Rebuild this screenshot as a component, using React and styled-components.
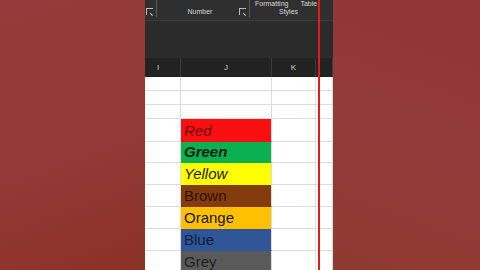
import React from 'react';
import styled, { createGlobalStyle } from 'styled-components';

const GlobalStyle = createGlobalStyle`
  html, body {
    margin: 0;
    padding: 0;
    width: 480px;
    height: 270px;
    overflow: hidden;
  }
`;

const Page = styled.div`
  display: flex;
  width: 480px;
  height: 270px;
  font-family: "Liberation Sans", Arial, sans-serif;
`;

const Side = styled.div`
  width: ${({ w }) => w}px;
  flex-shrink: 0;
  background: ${({ left }) =>
    left
      ? 'linear-gradient(160deg, #953b3b 0%, #933a38 55%, #8b3126 100%)'
      : 'linear-gradient(200deg, #913636 0%, #933a3a 55%, #8e3a30 100%)'};
`;

const Panel = styled.div`
  position: relative;
  width: 188px;
  flex-shrink: 0;
  display: flex;
  flex-direction: column;
  background: #fff;
  overflow: hidden;
`;

const Ribbon = styled.div`
  height: 58px;
  flex-shrink: 0;
  background: #2d2d2d;
  display: flex;
  flex-direction: column;
`;

const GroupRow = styled.div`
  height: 20px;
  flex-shrink: 0;
  display: grid;
  grid-template-columns: 12px 93px 83px;
  border-bottom: 1px solid #3a3a3a;
  background: #2f2f2f;
`;

const Group = styled.div`
  position: relative;
  display: flex;
  align-items: flex-end;
  justify-content: ${({ align }) => align || 'center'};
  border-right: ${({ sep }) => (sep ? '1px solid #5a5a5a' : 'none')};
  height: 17px;
  color: #d8d8d8;
  font-size: 7px;
`;

const GroupLabel = styled.span`
  padding-bottom: 2px;
  margin-right: ${({ mr }) => mr || 0}px;
`;

const Launcher = styled.span`
  position: absolute;
  right: ${({ r }) => r}px;
  bottom: 2px;
  width: 6px;
  height: 6px;
  border-left: 1px solid #bbb;
  border-top: 1px solid #bbb;
  &::after {
    content: '';
    position: absolute;
    right: 0;
    bottom: 0;
    width: 3px;
    height: 1px;
    background: #ddd;
    transform: rotate(45deg);
  }
`;

const TopCut = styled.div`
  position: absolute;
  top: 0;
  left: 5px;
  display: flex;
  gap: 12px;
  color: #d8d8d8;
  font-size: 7px;
  line-height: 8px;
`;

const RibbonBody = styled.div`
  flex: 1;
  background: #2b2b2b;
`;

const ColHeader = styled.div`
  height: 19px;
  flex-shrink: 0;
  display: grid;
  grid-template-columns: 36px 91px 44px 17px;
  background: #222;
`;

const ColName = styled.div`
  display: flex;
  align-items: center;
  justify-content: ${({ align }) => align || 'center'};
  padding-left: ${({ pl }) => pl || 0}px;
  border-right: 1px solid #3c3c3c;
  color: #cfcfcf;
  font-size: 8px;
`;

const Sheet = styled.div`
  flex: 1;
  min-height: 0;
  overflow: hidden;
  display: grid;
  grid-template-columns: 36px 91px 44px 17px;
  grid-template-rows: 14px 14px 14px 23px 21px 22px 22px 22px 22px 22px;
`;

const Cell = styled.div`
  border-right: 1px solid #dcdcdc;
  border-bottom: 1px solid #dcdcdc;
`;

const ColorCell = styled.div`
  background: ${({ bg }) => bg};
  color: ${({ fg }) => fg};
  font-size: 15px;
  font-style: ${({ italic }) => (italic ? 'italic' : 'normal')};
  font-weight: ${({ bold }) => (bold ? 'bold' : 'normal')};
  display: flex;
  align-items: flex-end;
  padding: 0 0 1px 3px;
  line-height: 18px;
  border-bottom: 1px solid ${({ bg }) => bg};
  border-right: 1px solid #dcdcdc;
`;

const PageBreak = styled.div`
  position: absolute;
  top: 0;
  bottom: 0;
  left: 173px;
  width: 2px;
  background: #e21b1b;
`;

const colors = [
  { name: 'Red', bg: '#f81010', fg: '#6e0808', italic: true },
  { name: 'Green', bg: '#0db050', fg: '#0b1f10', italic: true, bold: true },
  { name: 'Yellow', bg: '#ffff00', fg: '#1a1a00', italic: true },
  { name: 'Brown', bg: '#843c0c', fg: '#2a1204' },
  { name: 'Orange', bg: '#ffc000', fg: '#1c1400' },
  { name: 'Blue', bg: '#2f5597', fg: '#0d1d3e' },
  { name: 'Grey', bg: '#5a5a5a', fg: '#1e1e1e' },
];

export default function App() {
  return (
    <Page>
      <GlobalStyle />
      <Side w={145} left />
      <Panel>
        <Ribbon>
          <GroupRow>
            <Group sep>
              <Launcher r={3} />
            </Group>
            <Group sep>
              <GroupLabel mr={6}>Number</GroupLabel>
              <Launcher r={3} />
            </Group>
            <Group>
              <TopCut>
                <span>Formatting</span>
                <span>Table</span>
              </TopCut>
              <GroupLabel mr={6}>Styles</GroupLabel>
            </Group>
          </GroupRow>
          <RibbonBody />
        </Ribbon>
        <ColHeader>
          <ColName align="flex-start" pl={12}>I</ColName>
          <ColName>J</ColName>
          <ColName>K</ColName>
          <ColName />
        </ColHeader>
        <Sheet>
          {[0, 1, 2].map((r) => (
            <React.Fragment key={r}>
              <Cell />
              <Cell />
              <Cell />
              <Cell />
            </React.Fragment>
          ))}
          {colors.map((c) => (
            <React.Fragment key={c.name}>
              <Cell />
              <ColorCell bg={c.bg} fg={c.fg} italic={c.italic} bold={c.bold}>
                {c.name}
              </ColorCell>
              <Cell />
              <Cell />
            </React.Fragment>
          ))}
        </Sheet>
        <PageBreak />
      </Panel>
      <Side w={147} />
    </Page>
  );
}
